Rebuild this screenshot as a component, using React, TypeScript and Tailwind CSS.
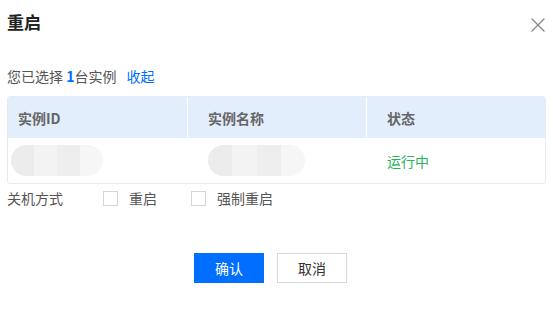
import { X } from "lucide-react";

function Blob({ className }: { className: string }) {
  return (
    <div className={"flex h-[31px] overflow-hidden rounded-full " + className}>
      <div className="flex-1 bg-[#ececec]" />
      <div className="flex-1 bg-[#f3f3f3]" />
      <div className="flex-1 bg-[#eeeeee]" />
      <div className="flex-1 bg-[#f6f6f6]" />
    </div>
  );
}

function Check({ label }: { label: string }) {
  return (
    <label className="flex items-center gap-[11px]">
      <span className="h-[15px] w-[15px] border border-[#d6d6d6] bg-white" />
      <span>{label}</span>
    </label>
  );
}

export default function App() {
  return (
    <div
      className="h-[309px] w-[553px] bg-white text-[14px] leading-[20px] text-[#333]"
      style={{ fontFamily: '"Noto Sans CJK SC", "Noto Sans", sans-serif' }}
    >
      <div className="flex items-start justify-between pl-[7px] pr-[3px] pt-[10px]">
        <h1 className="text-[17px] font-bold leading-[24px] text-[#222]">重启</h1>
        <X className="mt-[3px] h-[24px] w-[24px] text-[#8a8a8a]" strokeWidth={1.4} />
      </div>

      <div className="mt-[29px] pl-[7px] text-[#555]">
        您已选择 <span className="font-bold text-[#006eff]">1</span>台实例
        <span className="ml-[10px] text-[#006eff]">收起</span>
      </div>

      <div className="mx-[7px] mt-[10px] overflow-hidden rounded-[3px] border border-[#e6ebf0]">
        <div className="grid h-[41px] grid-cols-[180px_179px_1fr] bg-[#e3eefd] font-bold text-[#666]">
          <div className="flex items-center border-r border-white pl-[10px]">实例ID</div>
          <div className="flex items-center border-r border-white pl-[20px]">实例名称</div>
          <div className="flex items-center pl-[20px]">状态</div>
        </div>
        <div className="grid h-[45px] grid-cols-[180px_179px_1fr] items-center">
          <div className="pl-[3px]">
            <Blob className="w-[92px]" />
          </div>
          <div className="pl-[20px]">
            <Blob className="w-[97px]" />
          </div>
          <div className="pl-[20px] text-[#2bb35a]">运行中</div>
        </div>
      </div>

      <div className="mt-[4px] flex items-center pl-[7px] text-[#555]">
        <span className="w-[96px]">关机方式</span>
        <div className="flex items-center gap-[34px]">
          <Check label="重启" />
          <Check label="强制重启" />
        </div>
      </div>

      <div className="mt-[45px] flex justify-center gap-[13px] pr-[12px]">
        <button className="h-[30px] w-[70px] bg-[#006eff] text-white">确认</button>
        <button className="h-[30px] w-[70px] border border-[#d9d9d9] bg-white text-[#333]">取消</button>
      </div>
    </div>
  );
}
